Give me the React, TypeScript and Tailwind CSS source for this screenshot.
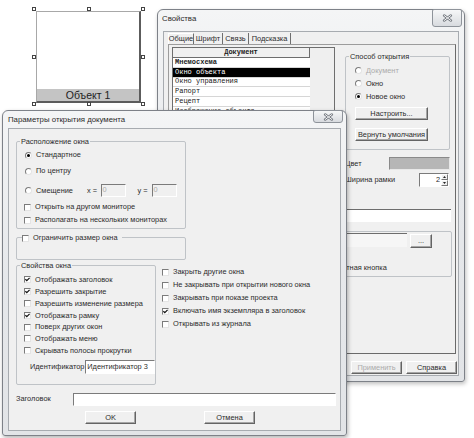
import React from "react";

type Cls = { className?: string };

function CloseGlyph() {
  return (
    <svg width="11" height="8" viewBox="0 0 11 8">
      <path d="M2.2 1.5 L8.8 6.5 M8.8 1.5 L2.2 6.5" stroke="#767b82" strokeWidth="2.6" strokeLinecap="round" fill="none" />
      <path d="M2.2 1.5 L8.8 6.5 M8.8 1.5 L2.2 6.5" stroke="#f3f4f5" strokeWidth="1" strokeLinecap="round" fill="none" />
    </svg>
  );
}

function CloseBtn({ className = "" }: Cls) {
  return (
    <div
      className={`flex items-center justify-center rounded-b-[3px] rounded-t-[2px] border border-[#8e939a] bg-gradient-to-b from-[#f6f7f8] to-[#d8dbdf] ${className}`}
    >
      <CloseGlyph />
    </div>
  );
}

function Radio({ label, checked = false, disabled = false }: { label: string; checked?: boolean; disabled?: boolean }) {
  return (
    <div className="flex h-full items-center gap-[4px]">
      <span className="flex h-[7px] w-[7px] items-center justify-center rounded-full border border-b-[#e4e4e4] border-l-[#7b7b7b] border-r-[#e4e4e4] border-t-[#7b7b7b] bg-white">
        {checked && <span className="h-[3px] w-[3px] rounded-full bg-black" />}
      </span>
      <span className={disabled ? "text-[#ababab]" : ""}>{label}</span>
    </div>
  );
}

function Check({ label, checked = false }: { label: string; checked?: boolean }) {
  return (
    <div className="flex h-full items-center gap-[4px]">
      <span className="flex h-[7px] w-[7px] items-center justify-center border border-b-[#e4e4e4] border-l-[#7b7b7b] border-r-[#e4e4e4] border-t-[#7b7b7b] bg-white">
        {checked && (
          <svg width="5" height="5" viewBox="0 0 5 5">
            <path d="M0.4 2.2 L1.8 3.7 L4.6 0.8" stroke="#111" strokeWidth="1.2" fill="none" />
          </svg>
        )}
      </span>
      <span>{label}</span>
    </div>
  );
}

function Btn({ label, disabled = false, className = "" }: { label: string; disabled?: boolean; className?: string }) {
  return (
    <div
      className={`flex items-center justify-center border border-b-[#646464] border-l-white border-r-[#646464] border-t-white bg-[#f0f0f0] shadow-[inset_-1px_-1px_0_#a6a6a6] ${className}`}
    >
      <span className={disabled ? "text-[#ababab]" : ""}>{label}</span>
    </div>
  );
}

function Group({ title, className = "", children }: { title?: React.ReactNode; className?: string; children?: React.ReactNode }) {
  return (
    <div className={`relative rounded-[2px] border border-[#bfc3c7] ${className}`}>
      {title && <div className="absolute -top-[4px] left-[3px] bg-[#f0f0f0] px-[1px]">{title}</div>}
      {children}
    </div>
  );
}

function CanvasObject() {
  return (
    <>
      <div className="absolute left-[36px] top-[11px] flex h-[92px] w-[105px] flex-col justify-end border-b-2 border-l border-r-2 border-t border-b-[#5c5c5c] border-l-[#a8a8a8] border-r-[#5c5c5c] border-t-[#a8a8a8] bg-white">
        <div className="flex h-[12px] items-center justify-center bg-[#c4c4c4] text-[10.5px] text-[#222]">Объект 1</div>
      </div>
      <span className="absolute left-[32px] top-[7px] h-[4px] w-[4px] border border-[#444] bg-white" />
      <span className="absolute left-[87px] top-[7px] h-[4px] w-[4px] border border-[#444] bg-white" />
      <span className="absolute left-[141px] top-[7px] h-[4px] w-[4px] border border-[#444] bg-white" />
      <span className="absolute left-[32px] top-[55px] h-[4px] w-[4px] border border-[#444] bg-white" />
      <span className="absolute left-[141px] top-[55px] h-[4px] w-[4px] border border-[#444] bg-white" />
      <span className="absolute left-[32px] top-[102px] h-[4px] w-[4px] border border-[#444] bg-white" />
      <span className="absolute left-[87px] top-[102px] h-[4px] w-[4px] border border-[#444] bg-white" />
      <span className="absolute left-[141px] top-[102px] h-[4px] w-[4px] border border-[#444] bg-white" />
    </>
  );
}

const docs = [
  { name: "Мнемосхема", bold: true },
  { name: "Окно объекта", selected: true },
  { name: "Окно управления" },
  { name: "Рапорт" },
  { name: "Рецепт" },
  { name: "Изображение объекта" },
  { name: "Отчёт" },
  { name: "Тренд" },
];

function PropsWindow() {
  return (
    <div className="absolute left-[157px] top-[9px] flex h-[373px] w-[308px] flex-col rounded-b-[3px] rounded-t-[6px] border border-[#7d8188] bg-gradient-to-b from-[#f4f5f6] via-[#e6e8eb] to-[#e2e4e7] shadow-[1px_2px_4px_rgba(0,0,0,0.25)]">
      <div className="flex h-[21px] items-start justify-between">
        <span className="ml-[4px] mt-[5px] text-[7.8px]">Свойства</span>
        <CloseBtn className="-mt-[1px] mr-[2px] h-[18px] w-[30px]" />
      </div>
      <div className="mx-[5px] flex h-[345px] flex-col border border-[#a7abb0] bg-[#f0f0f0]">
        <div className="ml-[4px] mt-[1px] flex h-[11px]">
          <div className="flex w-[26px] items-center justify-center border-l border-r border-t border-l-white border-r-[#6f6f6f] border-t-white">Общие</div>
          <div className="flex w-[29px] items-center justify-center border-r border-r-[#6f6f6f]">Шрифт</div>
          <div className="flex w-[26px] items-center justify-center border-r border-r-[#6f6f6f]">Связь</div>
          <div className="flex w-[42px] items-center justify-center border-r border-r-[#6f6f6f]">Подсказка</div>
        </div>
        <div className="ml-[4px] flex h-[310px] w-[288px] flex-col border border-b-[#6a6a6a] border-l-[#9c9c9c] border-r-[#6a6a6a] border-t-[#9c9c9c]">
          <div className="flex h-[164px] items-start">
            <div className="ml-[3px] mt-[2px] h-[150px] w-[163px] overflow-hidden border border-b-white border-l-[#6e6e6e] border-r-[#6e6e6e] border-t-[#6e6e6e] bg-[#efefef] font-['Liberation_Mono',monospace] text-[7px] text-[#1a1a1a]">
              <div className="flex h-[10px] w-[137px] items-center justify-center border-b border-r border-b-[#6d6d6d] border-r-[#6d6d6d] bg-[#f0f0f0] font-bold">
                Документ
              </div>
              {docs.map((d) => (
                <div
                  key={d.name}
                  className={`flex h-[9.8px] w-[137px] items-center border-b border-b-[#d6d6d6] pl-[2px] ${
                    d.selected ? "bg-black text-white" : "bg-white"
                  } ${d.bold ? "font-bold" : ""}`}
                >
                  {d.name}
                </div>
              ))}
            </div>
            <div className="ml-[10px] flex w-[105px] flex-col">
              <Group title="Способ открытия" className="mt-[11px] h-[94px]">
                <div className="flex flex-col pl-[9px] pt-[7px]">
                  <div className="h-[13px]">
                    <Radio label="Документ" disabled />
                  </div>
                  <div className="h-[13px]">
                    <Radio label="Окно" />
                  </div>
                  <div className="h-[13px]">
                    <Radio label="Новое окно" checked />
                  </div>
                  <Btn label="Настроить..." className="mt-[4px] h-[13px] w-[73px]" />
                  <Btn label="Вернуть умолчания" className="mt-[8px] h-[13px] w-[73px]" />
                </div>
              </Group>
              <div className="mt-[7px] flex h-[13px] items-center justify-between">
                <span>Цвет</span>
                <div className="h-[13px] w-[61px] border border-b-[#e8e8e8] border-l-[#8a8a8a] border-r-[#e8e8e8] border-t-[#8a8a8a] bg-[#b6b6b6]" />
              </div>
              <div className="mt-[3px] flex h-[14px] items-center justify-between pr-[1px]">
                <span>Ширина рамки</span>
                <div className="flex h-[14px] w-[30px] border border-b-white border-l-[#7b7b7b] border-r-white border-t-[#7b7b7b] bg-white">
                  <span className="flex flex-1 items-center justify-end pr-[1px]">2</span>
                  <div className="flex w-[7px] flex-col">
                    <div className="flex flex-1 items-center justify-center border border-b-[#777] border-l-white border-r-[#777] border-t-white bg-[#f0f0f0]">
                      <svg width="3" height="2" viewBox="0 0 3 2"><path d="M0 2 L1.5 0 L3 2 Z" fill="#222" /></svg>
                    </div>
                    <div className="flex flex-1 items-center justify-center border border-b-[#777] border-l-white border-r-[#777] border-t-white bg-[#f0f0f0]">
                      <svg width="3" height="2" viewBox="0 0 3 2"><path d="M0 0 L1.5 2 L3 0 Z" fill="#222" /></svg>
                    </div>
                  </div>
                </div>
              </div>
            </div>
          </div>
          <div className="ml-[8px] h-[13px] w-[274px] border-t border-t-[#6d6d6d] bg-white" />
          <Group className="ml-[8px] mt-[9px] h-[46px] w-[275px]">
            <div className="mt-[1px] flex items-start">
              <div className="ml-[3px] h-[14px] w-[226px] border-l border-t border-l-[#6d6d6d] border-t-[#6d6d6d] bg-[#f6f6f6]" />
              <Btn label="..." className="ml-[3px] mt-[1px] h-[13.5px] w-[22px]" />
            </div>
            <div className="ml-[128px] mt-[14px] h-[12px]">
              <Check label="Стандартная кнопка" />
            </div>
          </Group>
          <div className="flex-1" />
        </div>
        <div className="mt-[7px] flex h-[13px] justify-end gap-[4px] pr-[1px]">
          <Btn label="Применить" disabled className="h-[13px] w-[51px]" />
          <Btn label="Справка" className="h-[13px] w-[51px]" />
        </div>
      </div>
    </div>
  );
}

function OpenDialog() {
  return (
    <div className="absolute left-[2px] top-[110px] flex h-[326px] w-[345px] flex-col rounded-b-[3px] rounded-t-[6px] border border-[#7d8188] bg-gradient-to-b from-[#f4f5f6] via-[#e6e8eb] to-[#e2e4e7] shadow-[1px_2px_4px_rgba(0,0,0,0.3)]">
      <div className="flex h-[17px] items-start justify-between">
        <span className="ml-[5px] mt-[5px] text-[7.8px]">Параметры открытия документа</span>
        <CloseBtn className="-mt-[1px] mr-[3px] h-[13px] w-[30px]" />
      </div>
      <div className="mx-[5px] flex h-[303px] flex-col border border-[#a7abb0] bg-[#f0f0f0] pl-[7px]">
        <Group title="Расположение окна" className="mt-[12px] h-[88px] w-[170px]">
          <div className="flex flex-col pl-[7px] pt-[7px]">
            <div className="ml-[1px] h-[12px]">
              <Radio label="Стандартное" checked />
            </div>
            <div className="ml-[1px] mt-[4px] h-[12px]">
              <Radio label="По центру" />
            </div>
            <div className="ml-[1px] mt-[7px] flex h-[13px] items-center">
              <div className="w-[62px]">
                <Radio label="Смещение" />
              </div>
              <span className="w-[13.5px]">x =</span>
              <div className="flex h-[13px] w-[25px] items-start border border-b-white border-l-[#7b7b7b] border-r-white border-t-[#7b7b7b] pl-[1px] pt-[1px] text-[#ababab]">0</div>
              <span className="ml-[12px] w-[14px]">y =</span>
              <div className="flex h-[13px] w-[25px] items-start border border-b-white border-l-[#7b7b7b] border-r-white border-t-[#7b7b7b] pl-[1px] pt-[1px] text-[#ababab]">0</div>
            </div>
            <div className="mt-[4px] h-[12px]">
              <Check label="Открыть на другом мониторе" />
            </div>
            <div className="mt-[1px] h-[12px]">
              <Check label="Располагать на нескольких мониторах" />
            </div>
          </div>
        </Group>
        <div className="relative mt-[8px] h-[23px] w-[170px] rounded-[2px] border border-[#bfc3c7]">
          <div className="absolute -top-[4px] left-[5px] bg-[#f0f0f0] pr-[4px]">
            <div className="h-[8px]">
              <Check label="Ограничить размер окна" />
            </div>
          </div>
        </div>
        <div className="mt-[5px] flex items-start">
          <Group title="Свойства окна" className="h-[120px] w-[140px]">
            <div className="flex flex-col pl-[7px] pt-[8px]">
              <div className="h-[11.8px]"><Check label="Отображать заголовок" checked /></div>
              <div className="h-[11.8px]"><Check label="Разрешить закрытие" checked /></div>
              <div className="h-[11.8px]"><Check label="Разрешить изменение размера" /></div>
              <div className="h-[11.8px]"><Check label="Отображать рамку" checked /></div>
              <div className="h-[11.8px]"><Check label="Поверх других окон" /></div>
              <div className="h-[11.8px]"><Check label="Отображать меню" /></div>
              <div className="h-[11.8px]"><Check label="Скрывать полосы прокрутки" /></div>
              <div className="mt-[3.4px] flex h-[14px] items-center">
                <span className="w-[64px] pl-[6px]">Идентификатор</span>
                <div className="h-[14px] w-[73px] border border-b-white border-l-[#7b7b7b] border-r-white border-t-[#7b7b7b] bg-white pl-[1px] pt-[2px]">
                  Идентификатор 3
                </div>
              </div>
            </div>
          </Group>
          <div className="ml-[6px] flex flex-col pt-[0.5px]">
            <div className="h-[13px]"><Check label="Закрыть другие окна" /></div>
            <div className="h-[13px]"><Check label="Не закрывать при открытии нового окна" /></div>
            <div className="h-[13px]"><Check label="Закрывать при показе проекта" /></div>
            <div className="h-[13px]"><Check label="Включать имя экземпляра в заголовок" checked /></div>
            <div className="h-[13px]"><Check label="Открывать из журнала" /></div>
          </div>
        </div>
        <div className="mt-[7.5px] flex h-[13px] items-center">
          <span className="w-[57px]">Заголовок</span>
          <div className="h-[13px] w-[263px] border border-b-white border-l-[#7b7b7b] border-r-white border-t-[#7b7b7b] bg-white" />
        </div>
        <div className="mt-[5px] flex h-[13.5px]">
          <Btn label="OK" className="ml-[69px] w-[51px]" />
          <Btn label="Отмена" className="ml-[68px] w-[51px]" />
        </div>
      </div>
    </div>
  );
}

export default function App() {
  return (
    <div className="relative h-[438px] w-[474px] overflow-hidden bg-white font-['Liberation_Sans',Arial,sans-serif] text-[7.4px] leading-none text-[#2b2b2b]">
      <CanvasObject />
      <PropsWindow />
      <OpenDialog />
    </div>
  );
}
